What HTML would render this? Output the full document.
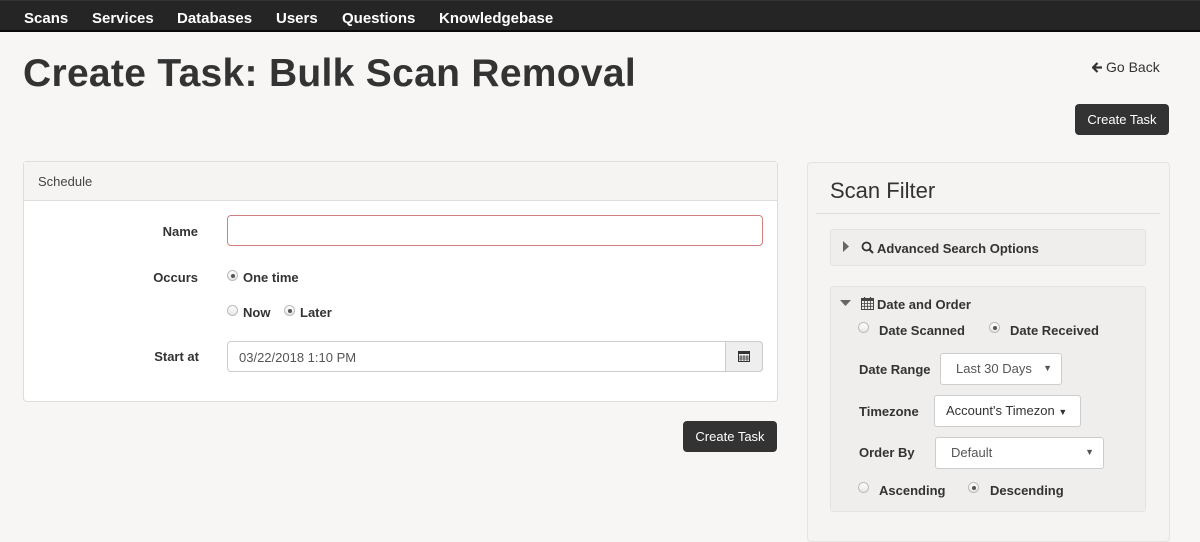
<!DOCTYPE html>
<html><head><meta charset="utf-8"><style>
*{box-sizing:border-box;margin:0;padding:0}
body{width:1200px;height:531px;overflow:hidden;background:#f7f6f4;font-family:"Liberation Sans",Arial,sans-serif;color:#333;position:relative;font-size:13px}
.a{position:absolute}
.nav{left:0;top:0;width:1200px;height:32px;background:#252525;border-bottom:2px solid #0a0a0a;border-top:1px solid #333}
.nav span{position:absolute;top:9px;color:#fff;font-weight:bold;font-size:15px}
h1{position:absolute;left:23px;top:52px;font-size:39px;font-weight:bold;color:#333;letter-spacing:0.3px}
.btn{position:absolute;background:#333;color:#fff;border-radius:4px;font-size:13px;text-align:center;line-height:31px;height:31px;width:94px}
.panel{position:absolute;background:#fff;border:1px solid #ddd;border-radius:4px}
.lbl{position:absolute;font-weight:bold;font-size:13px;text-align:right}
.inp{position:absolute;background:#fff;border:1px solid #ccc;border-radius:4px}
.r{position:absolute;width:11px;height:11px;border-radius:50%;border:1px solid #bbb;background:linear-gradient(#fff,#e6e6e6)}
.r.on::after{content:"";position:absolute;left:3px;top:3px;width:4px;height:4px;border-radius:50%;background:#555}
.t{position:absolute;font-weight:bold;font-size:13px;white-space:nowrap}
.box{position:absolute;background:#efeeec;border:1px solid #e3e3e3;border-radius:3px}
.sel{position:absolute;background:#fff;border:1px solid #ccc;border-radius:3px;color:#555;font-size:13px;padding-left:15px;line-height:29px;white-space:nowrap}
.sel i{position:absolute;right:9px;top:0;font-style:normal;font-size:9px}
</style></head><body>
<div class="a nav"><span style="left:24px">Scans</span><span style="left:92px">Services</span><span style="left:177px">Databases</span><span style="left:276px">Users</span><span style="left:342px">Questions</span><span style="left:439px">Knowledgebase</span></div>
<h1>Create Task: Bulk Scan Removal</h1>
<svg class="a" style="left:1092px;top:62px" width="11" height="11" viewBox="0 0 11 11"><path d="M1 5.5H10M5.5 1L1 5.5L5.5 10" stroke="#333" stroke-width="2.2" fill="none"/></svg>
<div class="a" style="left:1106px;top:59px;font-size:14px;color:#333">Go Back</div>
<div class="btn" style="left:1075px;top:104px">Create Task</div>

<div class="panel" style="left:23px;top:161px;width:755px;height:241px">
<div style="height:39px;background:#f5f4f2;border-bottom:1px solid #ddd;padding:12px 14px;font-size:13px;color:#444">Schedule</div>
</div>
<div class="lbl" style="left:100px;width:98px;top:224px">Name</div>
<div class="inp" style="left:227px;top:215px;width:536px;height:31px;border-color:#d08080"></div>
<div class="lbl" style="left:100px;width:98px;top:270px">Occurs</div>
<div class="r on" style="left:227px;top:270px"></div><div class="t" style="left:243px;top:270px">One time</div>
<div class="r" style="left:227px;top:305px"></div><div class="t" style="left:243px;top:305px">Now</div>
<div class="r on" style="left:284px;top:305px"></div><div class="t" style="left:300px;top:305px">Later</div>
<div class="lbl" style="left:100px;width:99px;top:349px">Start at</div>
<div class="inp" style="left:227px;top:341px;width:536px;height:31px;color:#555;padding:8px 11px">03/22/2018 1:10 PM</div>
<div class="a" style="left:725px;top:341px;width:38px;height:31px;background:#eee;border:1px solid #ccc;border-radius:0 4px 4px 0"></div>
<svg class="a" style="left:738px;top:350px" width="12" height="12" viewBox="0 0 12 12"><rect x="0.5" y="1.5" width="11" height="10" fill="none" stroke="#333"/><rect x="0.5" y="1.5" width="11" height="2.5" fill="#333"/><path d="M3 5v6M6 5v6M9 5v6M1 7h10M1 9h10" stroke="#333" stroke-width="0.8"/></svg>
<div class="btn" style="left:683px;top:421px">Create Task</div>

<div class="a" style="left:807px;top:162px;width:363px;height:380px;background:#f5f4f2;border:1px solid #e3e3e3;border-radius:4px"></div>
<div class="a" style="left:830px;top:178px;font-size:22px;color:#333">Scan Filter</div>
<div class="a" style="left:816px;top:213px;width:344px;height:1px;background:#ddd"></div>
<div class="box" style="left:830px;top:229px;width:316px;height:37px"></div>
<svg class="a" style="left:843px;top:241px" width="6" height="11" viewBox="0 0 6 11"><path d="M0 0L6 5.5L0 11Z" fill="#666"/></svg>
<svg class="a" style="left:861px;top:241px" width="13" height="13" viewBox="0 0 13 13"><circle cx="5.5" cy="5.5" r="4" stroke="#333" stroke-width="1.8" fill="none"/><path d="M8.5 8.5L12 12" stroke="#333" stroke-width="2"/></svg>
<div class="t" style="left:877px;top:241px">Advanced Search Options</div>
<div class="box" style="left:830px;top:286px;width:316px;height:226px"></div>
<svg class="a" style="left:840px;top:300px" width="11" height="6" viewBox="0 0 11 6"><path d="M0 0H11L5.5 6Z" fill="#666"/></svg>
<svg class="a" style="left:861px;top:297px" width="13" height="13" viewBox="0 0 13 13"><rect x="0.5" y="1.5" width="12" height="11" fill="none" stroke="#444"/><rect x="0.5" y="1.5" width="12" height="2.5" fill="#444"/><path d="M3.5 4v8M6.5 4v8M9.5 4v8M1 6.5h11M1 9.3h11" stroke="#444" stroke-width="0.8"/><path d="M3.5 0v3M9.5 0v3" stroke="#444" stroke-width="1.2"/></svg>
<div class="t" style="left:877px;top:297px">Date and Order</div>
<div class="r" style="left:858px;top:322px"></div><div class="t" style="left:879px;top:323px">Date Scanned</div>
<div class="r on" style="left:989px;top:322px"></div><div class="t" style="left:1010px;top:323px">Date Received</div>
<div class="t" style="left:859px;top:362px">Date Range</div>
<div class="sel" style="left:940px;top:353px;width:122px;height:32px">Last 30 Days<i>&#9660;</i></div>
<div class="t" style="left:859px;top:404px">Timezone</div>
<div class="sel" style="left:934px;top:395px;width:147px;height:32px;padding-left:11px;color:#333">Account's Timezon <span style="font-size:9px">&#9660;</span></div>
<div class="t" style="left:859px;top:445px">Order By</div>
<div class="sel" style="left:935px;top:437px;width:169px;height:32px">Default<i>&#9660;</i></div>
<div class="r" style="left:858px;top:482px"></div><div class="t" style="left:879px;top:483px">Ascending</div>
<div class="r on" style="left:968px;top:482px"></div><div class="t" style="left:990px;top:483px">Descending</div>
</body></html>
